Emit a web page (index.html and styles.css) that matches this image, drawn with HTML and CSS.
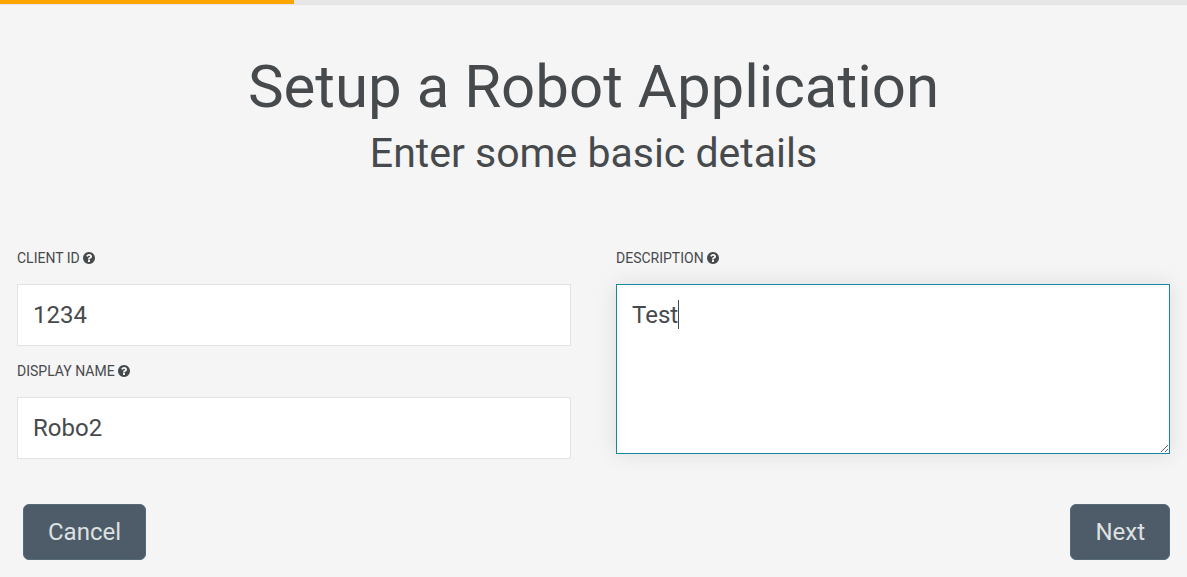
FILE: index.html
```html
<!DOCTYPE html>
<html lang="en">
<head>
<meta charset="utf-8">
<meta name="viewport" content="width=device-width, initial-scale=1">
<title>Setup a Robot Application</title>
<link rel="stylesheet" href="styles.css">
</head>
<body>
<svg class="sprite" aria-hidden="true">
  <symbol id="help" viewBox="0 0 1536 1536">
    <path d="M896 1248v-192q0-14-9-23t-23-9h-192q-14 0-23 9t-9 23v192q0 14 9 23t23 9h192q14 0 23-9t9-23zm256-672q0-88-55.500-163t-138.500-116-170-41q-243 0-371 213-15 24 8 42l132 100q7 6 19 6 16 0 25-12 53-68 86-92 34-24 86-24 48 0 85.500 26t37.500 59q0 38-20 61t-68 45q-63 28-115.500 86.500t-52.500 125.500v36q0 14 9 23t23 9h192q14 0 23-9t9-23q0-19 21.500-49.500t54.500-49.500q32-18 49-28.500t46-35 44.500-48 28-60.500 12.500-81zm384 192q0 209-103 385.500t-279.500 279.500-385.500 103-385.500-103-279.500-279.500-103-385.500 103-385.500 279.500-279.500 385.500-103 385.500 103 279.500 279.500 103 385.500z"/>
  </symbol>
</svg>
<div class="progress" role="progressbar" aria-label="Setup progress" aria-valuenow="25" aria-valuemin="0" aria-valuemax="100">
  <div class="progress-bar"></div>
</div>
<main class="page">
  <header class="heading">
    <h1 class="title">Setup a Robot Application</h1>
    <h2 class="subtitle">Enter some basic details</h2>
  </header>
  <form class="form">
    <div class="fields">
      <div class="column">
        <div class="field">
          <label class="label" for="client-id">Client ID <svg class="help"><use href="#help"/></svg></label>
          <input class="control" id="client-id" type="text" value="1234">
        </div>
        <div class="field">
          <label class="label" for="display-name">Display Name <svg class="help"><use href="#help"/></svg></label>
          <input class="control" id="display-name" type="text" value="Robo2">
        </div>
      </div>
      <div class="column">
        <div class="field">
          <label class="label" for="description">Description <svg class="help"><use href="#help"/></svg></label>
          <div class="area-wrap">
            <textarea class="control area" id="description" autofocus>Test</textarea>
            <span class="caret" aria-hidden="true"></span>
          </div>
        </div>
      </div>
    </div>
    <div class="actions">
      <button class="button" type="button">Cancel</button>
      <button class="button" type="submit">Next</button>
    </div>
  </form>
</main>
<script src="script.js"></script>
</body>
</html>
```
FILE: styles.css
```css
* {
  box-sizing: border-box;
}

body {
  margin: 0;
  background: #f5f5f5;
  color: #474a4c;
  font-family: Roboto, "Liberation Sans", sans-serif;
}

.sprite {
  position: absolute;
  width: 0;
  height: 0;
}

.progress {
  height: 5px;
  background: #e7e7e7;
  border-bottom: 1px solid #e3e3e3;
}

.progress-bar {
  width: 24.8%;
  height: 4px;
  background: #ffa500;
}

.page {
  padding: 48px 17px 17px;
}

.heading {
  text-align: center;
}

.title,
.subtitle {
  margin: 0;
  font-weight: 400;
}

.title {
  font-size: 60px;
  line-height: 68px;
}

.subtitle {
  margin-top: 4px;
  font-size: 41px;
  line-height: 56px;
}

.fields {
  display: grid;
  grid-template-columns: 1fr 1fr;
  gap: 45px;
  margin-top: 66px;
}

.field {
  display: flex;
  flex-direction: column;
  margin-bottom: 14px;
}

.label {
  margin-bottom: 15px;
  font-size: 14px;
  line-height: 22px;
  text-transform: uppercase;
}

.help {
  width: 12px;
  height: 12px;
  vertical-align: -1px;
  fill: currentColor;
}

.control {
  display: block;
  width: 100%;
  height: 62px;
  padding: 15px;
  border: 1px solid #e3e3e3;
  border-radius: 0;
  background: #fff;
  color: inherit;
  font: 24px/30px Roboto, "Liberation Sans", sans-serif;
}

.area-wrap {
  position: relative;
}

.area {
  height: 170px;
  resize: vertical;
  caret-color: transparent;
}

.caret {
  position: absolute;
  top: 16px;
  left: 62px;
  width: 1px;
  height: 29px;
  background: #474a4c;
  pointer-events: none;
}

.control:focus {
  outline: none;
  border-color: #1a87a0;
  box-shadow: 0 0 20px rgba(0, 0, 0, 0.1);
}

.actions {
  display: flex;
  justify-content: space-between;
  margin-top: 31px;
  padding-left: 6px;
}

.button {
  height: 56px;
  padding: 0 24px;
  border: 1px solid #566b7a;
  border-radius: 6px;
  background: #4d5c68;
  color: #dfe0e1;
  font: 24px/30px Roboto, "Liberation Sans", sans-serif;
}
```
FILE: script.js
```js
const description = document.getElementById("description");
const caret = document.querySelector(".caret");

description.focus();
description.setSelectionRange(description.value.length, description.value.length);

// The drawn caret gives way to the native one as soon as the text is edited.
function useNativeCaret() {
  caret.hidden = true;
  caret.style.display = "none";
  description.style.caretColor = "auto";
}

["input", "keydown", "pointerdown", "blur"].forEach((type) => {
  description.addEventListener(type, useNativeCaret);
});
```
